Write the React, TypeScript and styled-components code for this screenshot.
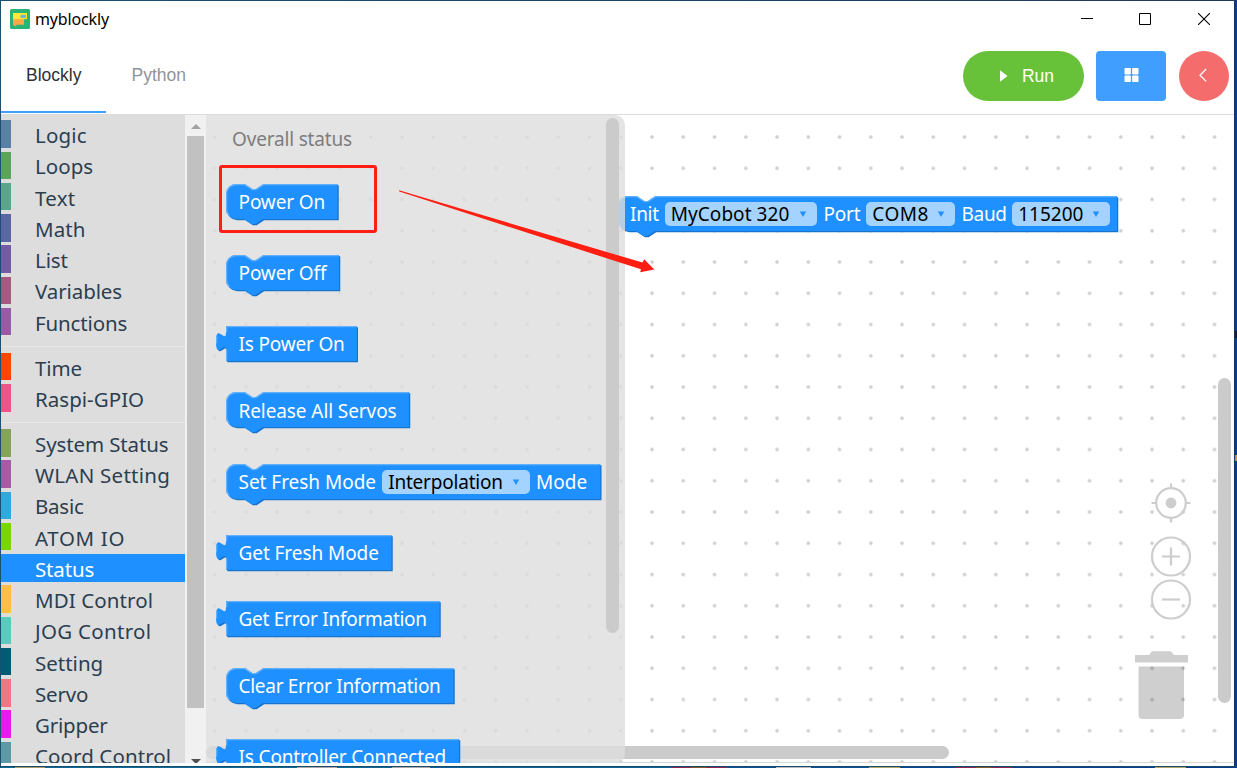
import React from 'react';
import styled, { createGlobalStyle } from 'styled-components';

const GlobalStyle = createGlobalStyle`
  *, *::before, *::after { box-sizing: border-box; }
  html, body { margin: 0; padding: 0; overflow: hidden; }
  body { font-family: 'Noto Sans', 'Open Sans', sans-serif; }
  svg { display: block; }
`;

const Desktop = styled.div`
  width: 1237px;
  height: 768px;
  padding: 1px 3px 2px 1px;
  background:
    linear-gradient(#c98f3a, #c98f3a) 1235px 455px / 2px 6px no-repeat,
    linear-gradient(#111c33, #111c33) 1235px 331px / 2px 7px no-repeat,
    linear-gradient(#17335f, #17335f) 1234px 0 / 1px 766px no-repeat,
    linear-gradient(90deg, #1b5070, #1d3a5c) 0 0 / 1237px 1px no-repeat,
    linear-gradient(#1b5070, #1b5070) 0 0 / 1px 768px no-repeat,
    linear-gradient(#174b6d, #174b6d) 0 766px / 1237px 1px no-repeat,
    linear-gradient(90deg,
      #0d6b97 15px, #b09a68 15px 45px, #0d6b97 45px 297px, #b0a8a8 297px 337px,
      #0d6b97 337px 392px, #b0a8a8 392px 430px, #0d6398 430px 671px,
      #8e2a50 671px 691px, #8d5a1c 691px 706px, #8e2a50 706px 727px,
      #0b519a 727px 776px, #b9b9bd 776px 811px, #0b519a 811px 869px,
      #b8a565 869px 900px, #0a479a 900px 955px, #8e2a50 955px 976px,
      #8d5a1c 976px 991px, #8e2a50 991px 1012px, #0a3f92 1012px 1155px,
      #b8a565 1155px 1186px, #0a3a8c 1186px) 0 767px / 1237px 1px no-repeat,
    #073b94;
`;

const Window = styled.div`
  display: flex;
  flex-direction: column;
  height: 765px;
  background: #fff;
`;

const TitleBar = styled.header`
  display: flex;
  align-items: center;
  height: 36px;
  padding: 0 24px 0 9px;
`;

const AppName = styled.span`
  margin-left: 5px;
  flex: 1;
  font-size: 16px;
  letter-spacing: -0.15px;
  color: #000;
`;

const WindowControls = styled.div`
  display: flex;
  gap: 46px;

  & > :last-child { margin-left: 1px; }
`;

const TabBar = styled.nav`
  display: flex;
  align-items: flex-start;
  height: 78px;
  border-bottom: 1px solid #dcdcdc;
  font-family: 'Liberation Sans', Arial, sans-serif;
`;

const Tab = styled.div<{ $active?: boolean; $width: number }>`
  width: ${p => p.$width}px;
  height: 76px;
  display: flex;
  align-items: center;
  justify-content: center;
  padding: 2px 0 0 0.5px;
  font-size: 17.5px;
  color: ${p => (p.$active ? '#303133' : '#909399')};
  border-bottom: 2px solid ${p => (p.$active ? '#409eff' : 'transparent')};
`;

const Actions = styled.div`
  display: flex;
  margin: 14px 5px 0 auto;
`;

const ActionButton = styled.button<{ $width: number; $radius: number; $color: string }>`
  display: flex;
  align-items: center;
  justify-content: center;
  width: ${p => p.$width}px;
  height: 50px;
  margin-left: 12px;
  padding: 0;
  border: 0;
  border-radius: ${p => p.$radius}px;
  background: ${p => p.$color};
  color: #fff;
  font: 17.5px 'Liberation Sans', Arial, sans-serif;

  &:first-child { padding-left: 6px; }
  &:last-child { margin-left: 13px; padding-right: 2px; }
`;

const RunLabel = styled.span`
  margin-left: 14px;
`;

const Main = styled.main`
  display: flex;
  height: 648px;
  overflow: hidden;
`;

const Toolbox = styled.aside`
  width: 184px;
  height: 100%;
  padding-top: 5.25px;
  overflow: hidden;
  background: #ddd;
`;

const Category = styled.div<{ $color: string; $selected?: boolean; $spacing: number }>`
  height: 27.5px;
  margin-bottom: 3.75px;
  padding: 0.75px 0 0 24px;
  border-left: 10px solid ${p => p.$color};
  background: ${p => (p.$selected ? p.$color : 'transparent')};
  color: ${p => (p.$selected ? '#fff' : '#2c3e50')};
  font-size: 20.5px;
  line-height: 28px;
  letter-spacing: ${p => p.$spacing}px;
  white-space: nowrap;
`;

const Separator = styled.div`
  height: 1px;
  margin: 10.75px 0 5.75px;
  background: #e8e8e8;
`;

const ToolboxScroll = styled.div`
  display: flex;
  flex-direction: column;
  align-items: center;
  width: 21px;
  height: 100%;
  padding-top: 9px;
  background: #f1f1f1;
`;

const ToolboxThumb = styled.div`
  flex: none;
  width: 17px;
  height: 572px;
  margin: 7px 0 51px;
  background: #c1c1c1;
`;

const Workspace = styled.section`
  position: relative;
  flex: 1;
  height: 100%;
  overflow: hidden;
  background:
    linear-gradient(#d6d6d6, #d6d6d6) 0 100% / 100% 1px no-repeat,
    radial-gradient(circle at 15.625px 15.625px, #cfcfcf 1.3px, rgba(207, 207, 207, 0) 2.2px)
    -7.1px 6.4px / 31.25px 31.25px #fff;
`;

const Flyout = styled.div`
  position: absolute;
  left: 0;
  top: 0;
  width: 419px;
  height: 648px;
  padding: 10px 0 0 20px;
  border-radius: 0 10px 10px 0;
  background: rgba(221, 221, 221, 0.8);
  overflow: hidden;
`;

const FlyoutLabel = styled.div`
  height: 28px;
  margin: 0 0 30.65px 6px;
  font-size: 19px;
  line-height: 28px;
  letter-spacing: -0.18px;
  color: #7d7d7d;
`;

const ScrollThumb = styled.div<{ $x: number; $y: number; $w: number; $h: number }>`
  position: absolute;
  left: ${p => p.$x}px;
  top: ${p => p.$y}px;
  width: ${p => p.$w}px;
  height: ${p => p.$h}px;
  border-radius: 7px;
  background: #cbcbcb;
`;

const BlockBody = styled.div<{ $width: number; $statement: boolean }>`
  position: relative;
  display: flex;
  align-items: center;
  gap: 6.25px;
  width: ${p => p.$width}px;
  height: 36.25px;
  margin-bottom: ${p => (p.$statement ? 35 : 30.1)}px;
  padding-left: 12.5px;
`;

const BlockShape = styled.svg`
  position: absolute;
  left: -12px;
  top: -2px;
`;

const Word = styled.span<{ $width?: number; $spacing?: number }>`
  position: relative;
  flex: none;
  width: ${p => (p.$width ? `${p.$width}px` : 'auto')};
  font-size: 19px;
  line-height: 26px;
  letter-spacing: ${p => p.$spacing ?? 0}px;
  white-space: nowrap;
  color: #fff;
`;

const Field = styled.span<{ $width: number; $spacing: number }>`
  position: relative;
  flex: none;
  display: flex;
  align-items: center;
  justify-content: space-between;
  width: ${p => p.$width}px;
  height: 24px;
  padding: 0 10px 0 6px;
  border-radius: 5px;
  background: #a5d3ff;
  font-size: 19px;
  line-height: 24px;
  letter-spacing: ${p => p.$spacing}px;
  white-space: nowrap;
  color: #000;
`;

const PlacedBlock = styled.div`
  position: absolute;
  left: 411.5px;
  top: 81.3px;
`;

const Control = styled.div<{ $x: number; $y: number }>`
  position: absolute;
  left: ${p => p.$x}px;
  top: ${p => p.$y}px;
`;

const Highlight = styled.div`
  position: absolute;
  left: 219px;
  top: 165px;
  width: 158px;
  height: 68px;
  border: 3px solid #ff1e12;
  border-radius: 3px;
`;

const ArrowLayer = styled.svg`
  position: absolute;
  left: 395px;
  top: 185px;
`;

type Cat = [string, string, number] | null;

const categories: Cat[] = [
  ['Logic', '#5b80a5', 0.15],
  ['Loops', '#5ba55b', 0.05],
  ['Text', '#5ba58c', 0.3],
  ['Math', '#5b67a5', 0.1],
  ['List', '#745ba5', -0.1],
  ['Variables', '#a55b80', -0.1],
  ['Functions', '#995ba5', -0.12],
  null,
  ['Time', '#ff4500', -0.15],
  ['Raspi-GPIO', '#f2528a', 0.03],
  null,
  ['System Status', '#84a35b', -0.12],
  ['WLAN Setting', '#a55ba5', 0.25],
  ['Basic', '#32a9dd', -0.25],
  ['ATOM IO', '#7ad600', 0.65],
  ['Status', '#1e90ff', -0.15],
  ['MDI Control', '#ffbf45', 0.1],
  ['JOG Control', '#5ccabd', 0.3],
  ['Setting', '#015b75', 0],
  ['Servo', '#f07885', -0.2],
  ['Gripper', '#ec1ae8', -0.2],
  ['Coord Control', '#5c9aa5', 0.1],
];

type Part = { text: string; width?: number; spacing?: number; field?: boolean };
type BlockData = { width: number; output?: boolean; parts: Part[] };

const flyoutBlocks: BlockData[] = [
  { width: 111.5, parts: [{ text: 'Power On', spacing: -0.12 }] },
  { width: 113, parts: [{ text: 'Power Off', spacing: -0.12 }] },
  { width: 130.75, output: true, parts: [{ text: 'Is Power On', spacing: -0.18 }] },
  { width: 183, parts: [{ text: 'Release All Servos', spacing: -0.09 }] },
  {
    width: 374.25,
    parts: [
      { text: 'Set Fresh Mode', width: 137.4, spacing: -0.03 },
      { text: 'Interpolation', width: 147.5, spacing: -0.2, field: true },
      { text: 'Mode', spacing: 0.1 },
    ],
  },
  { width: 165.5, output: true, parts: [{ text: 'Get Fresh Mode', spacing: -0.07 }] },
  { width: 213.5, output: true, parts: [{ text: 'Get Error Information', spacing: -0.27 }] },
  { width: 227.5, parts: [{ text: 'Clear Error Information', spacing: -0.29 }] },
  { width: 233, output: true, parts: [{ text: 'Is Controller Connected', spacing: -0.15 }] },
];

const initBlock: BlockData = {
  width: 499,
  parts: [
    { text: 'Init', width: 28.5, spacing: -0.3 },
    { text: 'MyCobot 320', width: 152.5, spacing: 0.05, field: true },
    { text: 'Port', width: 36.5, spacing: -0.2 },
    { text: 'COM8', width: 89, spacing: 0.5, field: true },
    { text: 'Baud', width: 44.5, spacing: -0.3 },
    { text: '115200', width: 98, spacing: 0, field: true },
  ],
};

function blockPath(w: number, output?: boolean) {
  return output
    ? `M0,0 H${w} V28 H0 V20 c0,-10 -8,8 -8,-7.5 s8,2.5 8,-7.5 z`
    : `M0,8 A8,8 0 0,1 8,0 H15 l6,4 3,0 6,-4 H${w} V28 H29.5 l-6,4 -3,0 -6,-4 H8 a8,8 0 0,1 -8,-8 z`;
}

function highlightPath(w: number, output?: boolean) {
  return output
    ? `M0.5,0.5 H${w - 0.5} M0.5,27.5 V18.5 M-7.2,14 Q-8,11 -7,8.5 M0.5,0.5 V5`
    : `M2.7,25.3 A7.5,7.5 0 0,1 0.5,20 V8 A7.5,7.5 0 0,1 8,0.5 H15 l6,4 3,0 6,-4 H${w - 0.5}`;
}

function Block({ width, output, parts }: BlockData) {
  const w = width / 1.25;
  return (
    <BlockBody $width={width} $statement={!output}>
      <BlockShape width={width + 16} height={46} fill="none">
        <g transform="translate(12 2) scale(1.25)">
          <path d={blockPath(w, output)} transform="translate(1 1)" fill="#1873cc" />
          <path d={blockPath(w, output)} fill="#1e90ff" />
          <path d={highlightPath(w, output)} stroke="#62b1ff" />
        </g>
      </BlockShape>
      {parts.map(p =>
        p.field ? (
          <Field key={p.text} $width={p.width ?? 100} $spacing={p.spacing ?? 0}>
            {p.text}
            <svg width="8" height="8" viewBox="0 0 8 8">
              <path d="M0.8 1.5h6.4L4 7z" fill="#1e90ff" />
            </svg>
          </Field>
        ) : (
          <Word key={p.text} $width={p.width} $spacing={p.spacing}>
            {p.text}
          </Word>
        ),
      )}
    </BlockBody>
  );
}

function Logo() {
  return (
    <svg width="20" height="20" viewBox="0 0 20 20">
      <rect width="20" height="20" rx="1.500" fill="#2bb277" />
      <path d="M3 10h11v5.800H6.800L5.300 17.600 3 15.800z" fill="#f7a947" />
      <path d="M3 4h14v6.200H3z" fill="#ffe63b" />
      <path d="M9.800 7.300L11.500 5.800H16V9h-4.500z" fill="#6fb9c4" />
    </svg>
  );
}

export default function App() {
  return (
    <Desktop>
      <GlobalStyle />
      <Window>
        <TitleBar>
          <Logo />
          <AppName>myblockly</AppName>
          <WindowControls>
            <svg width="12" height="12">
              <path d="M0 5.500h12" stroke="#000" />
            </svg>
            <svg width="12" height="12">
              <path d="M.5.5h11v11H.5z" stroke="#000" fill="none" />
            </svg>
            <svg width="12" height="12">
              <path d="M0 0l12 12M12 0L0 12" stroke="#000" strokeWidth="1.100" />
            </svg>
          </WindowControls>
        </TitleBar>

        <TabBar>
          <Tab $active $width={105}>Blockly</Tab>
          <Tab $width={105}>Python</Tab>
          <Actions>
            <ActionButton $width={121} $radius={25} $color="#67c23a">
              <svg width="9" height="13">
                <path d="M1 .3v11.400L8.500 6z" fill="#fff" />
              </svg>
              <RunLabel>Run</RunLabel>
            </ActionButton>
            <ActionButton $width={70} $radius={4} $color="#409eff">
              <svg width="15" height="18" fill="#fff">
                <rect x=".5" y="1" width="6.400" height="6.400" rx=".8" />
                <rect x="8.100" y="1" width="6.400" height="6.400" rx=".8" />
                <rect x=".5" y="8.600" width="6.400" height="6.400" rx=".8" />
                <rect x="8.100" y="8.600" width="6.400" height="6.400" rx=".8" />
              </svg>
            </ActionButton>
            <ActionButton $width={50} $radius={25} $color="#f56c6c">
              <svg width="10" height="16">
                <path d="M8.200 1L2 7.200l6.200 6.200" stroke="#fff" strokeWidth="1.300" fill="none" />
              </svg>
            </ActionButton>
          </Actions>
        </TabBar>

        <Main>
          <Toolbox>
            {categories.map((c, i) =>
              c ? (
                <Category key={c[0]} $color={c[1]} $spacing={c[2]} $selected={c[0] === 'Status'}>
                  {c[0]}
                </Category>
              ) : (
                <Separator key={i} />
              ),
            )}
          </Toolbox>
          <ToolboxScroll>
            <svg width="10" height="5">
              <path d="M0 5L5 0l5 5z" fill="#a3a3a3" />
            </svg>
            <ToolboxThumb />
            <svg width="10" height="5">
              <path d="M0 0h10L5 5z" fill="#505050" />
            </svg>
          </ToolboxScroll>

          <Workspace>
            <PlacedBlock>
              <Block {...initBlock} />
            </PlacedBlock>
            <Control $x={943} $y={367}>
              <svg width="44" height="44" fill="none" stroke="#cdcdcd" strokeWidth="2.200">
                <circle cx="22" cy="21" r="14.800" />
                <circle cx="22" cy="21" r="5.400" fill="#cdcdcd" stroke="none" />
                <path d="M22 1.500v5M22 35.500v5M2.500 21h5M36.500 21h5" />
              </svg>
            </Control>
            <Control $x={943} $y={420}>
              <svg width="44" height="44" fill="none" stroke="#cdcdcd" strokeWidth="2.200">
                <circle cx="22" cy="21.500" r="19" />
                <path d="M13 21.500h18M22 12.500v18" />
              </svg>
            </Control>
            <Control $x={943} $y={462.5}>
              <svg width="44" height="44" fill="none" stroke="#cdcdcd" strokeWidth="2.200">
                <circle cx="22" cy="21.500" r="19" />
                <path d="M13 21.500h18" />
              </svg>
            </Control>
            <Control $x={929} $y={536}>
              <svg width="53" height="69" fill="rgba(0,0,0,.19)">
                <path d="M0 4h14l3-3.700h19L39 4h14v7.500H0z" />
                <path d="M3.500 15.500H49V64a4 4 0 0 1-4 4H7.500a4 4 0 0 1-4-4z" />
              </svg>
            </Control>
            <ScrollThumb $x={0} $y={631} $w={743} $h={13} />
            <ScrollThumb $x={1012} $y={263} $w={13} $h={325} />
            <Flyout>
              <FlyoutLabel>Overall status</FlyoutLabel>
              {flyoutBlocks.map(b => (
                <Block key={b.parts[0].text} {...b} />
              ))}
              <ScrollThumb $x={400} $y={3} $w={13} $h={515} />
            </Flyout>
          </Workspace>
        </Main>
      </Window>

      <Highlight />
      <ArrowLayer width="265" height="95">
        <path d="M4 5.300L4.300 6.600 246 84.300l-.800 3L259.300 84.500 249.200 74.300l-1.700 3.300z" fill="#ff1e12" />
      </ArrowLayer>
    </Desktop>
  );
}
